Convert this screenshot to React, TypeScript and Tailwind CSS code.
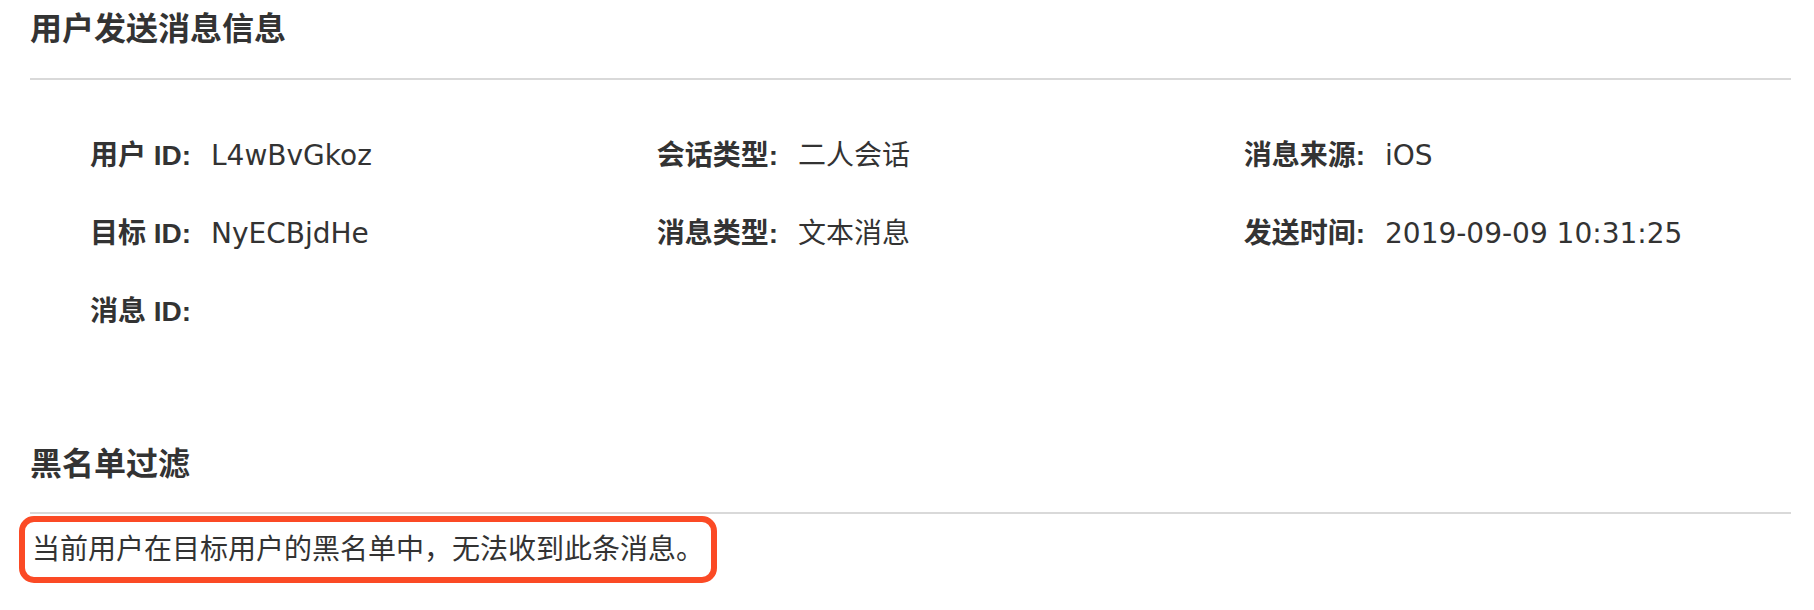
import React from "react";

const labelFont = "font-['Liberation_Sans','Noto_Sans_CJK_SC',sans-serif]";
const valueFont = "font-['DejaVu_Sans','Noto_Sans_CJK_SC',sans-serif]";

function Field({ label, value }: { label: string; value?: string }) {
  return (
    <div className="flex items-center h-[78px]">
      <div className={`w-[161px] shrink-0 text-right font-bold text-[28px] leading-[40px] text-[#333333] ${labelFont}`}>
        {label}
      </div>
      <div className={`ml-[20px] text-[28px] leading-[40px] text-[#333333] ${valueFont}`}>{value}</div>
    </div>
  );
}

export default function App() {
  return (
    <div className="w-[1814px] h-[610px] bg-white pl-[30px] pr-[23px] pt-[5px] overflow-hidden">
      <div className={`h-[48px] leading-[48px] text-[32px] font-bold text-[#333333] ${labelFont}`}>
        用户发送消息信息
      </div>
      <div className="mt-[25px] h-[2px] bg-[#d9d9d9]" />
      <div className="mt-[37px] grid grid-cols-3">
        <Field label="用户 ID:" value="L4wBvGkoz" />
        <Field label="会话类型:" value="二人会话" />
        <Field label="消息来源:" value="iOS" />
        <Field label="目标 ID:" value="NyECBjdHe" />
        <Field label="消息类型:" value="文本消息" />
        <Field label="发送时间:" value="2019-09-09 10:31:25" />
        <Field label="消息 ID:" />
      </div>
      <div className={`mt-[89px] h-[48px] leading-[48px] text-[32px] font-bold text-[#333333] ${labelFont}`}>
        黑名单过滤
      </div>
      <div className="mt-[24px] h-[2px] bg-[#d9d9d9]" />
      <div className="mt-[2px] -ml-[11px] flex items-center w-[698px] h-[67px] border-[6px] border-[#fb4a25] rounded-[15px] pl-[7px]">
        <span className={`text-[28px] leading-[40px] text-[#333333] ${valueFont}`}>
          当前用户在目标用户的黑名单中，无法收到此条消息。
        </span>
      </div>
    </div>
  );
}
